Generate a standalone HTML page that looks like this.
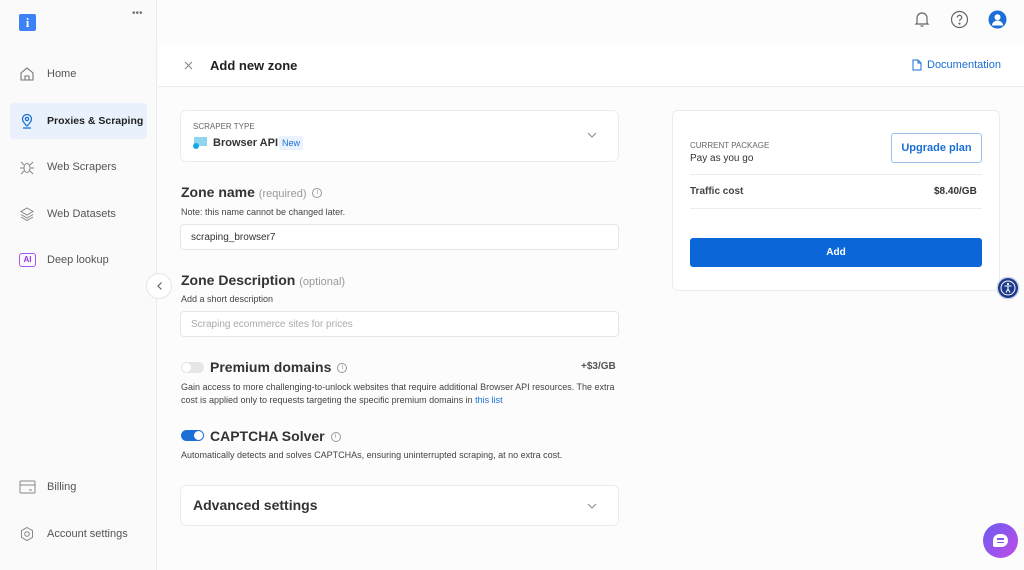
<!DOCTYPE html>
<html><head><meta charset="utf-8"><style>
*{box-sizing:border-box;margin:0;padding:0}
body{width:1024px;height:570px;overflow:hidden;font-family:"Liberation Sans",sans-serif;background:#fcfcfc;color:#222;position:relative;white-space:nowrap}
.abs{position:absolute}
.side{left:0;top:0;width:157px;height:570px;background:#fafafa;border-right:1px solid #ececec}
.nav{position:absolute;left:10px;width:137px;height:36px;display:flex;align-items:center;font-size:11px;color:#555}
.nav svg{position:absolute;left:9px}
.nav span{position:absolute;left:37px}
.card{background:#fff;border:1px solid #ececec;border-radius:6px}
.inp{left:180px;width:439px;height:26px;background:#fff;border:1px solid #e6e6e6;border-radius:4px;font-size:10px;padding:0 10px;display:flex;align-items:center}
h3{font-size:14px;font-weight:bold;color:#333}
.small{font-size:9px;color:#444}
.info{display:inline-block;width:10px;height:10px;border:1px solid #999;border-radius:50%;font-size:7px;color:#999;text-align:center;line-height:8px;vertical-align:middle;margin-left:6px;font-weight:normal}
</style></head><body>
<div class="abs side">
 <div class="abs" style="left:19px;top:14px;width:17px;height:17px;background:#3b82f6;border-radius:2px;color:#fff;font-weight:bold;font-size:13px;text-align:center;line-height:17px;font-family:'Liberation Serif',serif">i</div>
 <div class="abs" style="left:132px;top:8px;font-size:10px;color:#777">•••</div>
 <div class="nav" style="top:56px"><svg width="16" height="16" viewBox="0 0 16 16" fill="none" stroke="#777" stroke-width="1.1"><path d="M2 14V7l6-5 6 5v7zM6 14v-4h4v4"/></svg><span>Home</span></div>
 <div class="nav" style="top:103px;background:#e9f2fc;border-radius:3px;color:#222;font-weight:bold;font-size:10.5px"><svg width="16" height="16" viewBox="0 0 16 16" fill="none" stroke="#1b6fd6" stroke-width="1.3"><path d="M8 13s-4.5-4-4.5-7a4.5 4.5 0 019 0c0 3-4.5 7-4.5 7z"/><circle cx="8" cy="6" r="1.6"/><path d="M4 15h8"/></svg><span>Proxies &amp; Scraping</span></div>
 <div class="nav" style="top:149px"><svg width="16" height="16" viewBox="0 0 16 16" fill="none" stroke="#888" stroke-width="1"><ellipse cx="8" cy="9" rx="3" ry="4.5"/><path d="M5 6L2 3M11 6l3-3M5 9H1M11 9h4M5 12l-3 3M11 12l3 3"/></svg><span>Web Scrapers</span></div>
 <div class="nav" style="top:196px"><svg width="16" height="16" viewBox="0 0 16 16" fill="none" stroke="#888" stroke-width="1"><path d="M8 2l6 3.5-6 3.5-6-3.5zM2 8.5L8 12l6-3.5M2 11l6 3.5 6-3.5"/></svg><span>Web Datasets</span></div>
 <div class="nav" style="top:242px"><div class="abs" style="left:9px;width:17px;height:14px;border:1px solid #a855f7;border-radius:3px;color:#9333ea;font-size:8px;font-weight:bold;text-align:center;line-height:12px">AI</div><span>Deep lookup</span></div>
 <div class="nav" style="top:469px"><svg width="17" height="14" viewBox="0 0 17 14" fill="none" stroke="#888" stroke-width="1"><rect x="1" y="1" width="15" height="12" rx="1"/><path d="M1 5h15M10 10h3"/></svg><span>Billing</span></div>
 <div class="nav" style="top:516px"><svg width="16" height="16" viewBox="0 0 16 16" fill="none" stroke="#888" stroke-width="1"><path d="M8 1.5l5.5 3.2v6.6L8 14.5l-5.5-3.2V4.7z"/><circle cx="8" cy="8" r="2.3"/></svg><span>Account settings</span></div>
</div>
<div class="abs" style="left:146px;top:273px;width:26px;height:26px;border-radius:50%;background:#fff;border:1px solid #e5e5e5"><svg class="abs" style="left:8px;top:7px" width="10" height="10" viewBox="0 0 10 10" fill="none" stroke="#666" stroke-width="1.2"><path d="M6.5 1.5L3 5l3.5 3.5"/></svg></div>
<svg class="abs" style="left:913px;top:10px" width="18" height="18" viewBox="0 0 18 18" fill="none" stroke="#666" stroke-width="1.2"><path d="M4 13V8a5 5 0 0110 0v5l1 1H3zM7.5 16h3"/></svg>
<svg class="abs" style="left:950px;top:10px" width="19" height="19" viewBox="0 0 19 19" fill="none" stroke="#666" stroke-width="1.2"><circle cx="9.5" cy="9.5" r="8"/><path d="M7.3 7.5a2.2 2.2 0 114 1.2c-.8.6-1.8 1-1.8 2.3"/><circle cx="9.5" cy="13.6" r=".5" fill="#666"/></svg>
<svg class="abs" style="left:988px;top:10px" width="19" height="19" viewBox="0 0 19 19"><circle cx="9.5" cy="9.5" r="9" fill="#1b6fd6"/><circle cx="9.5" cy="7.3" r="3" fill="#fff"/><path d="M4 15.5a5.5 5 0 0111 0" fill="#fff"/></svg>
<div class="abs" style="left:158px;top:44px;width:866px;height:43px;background:#fff;border-bottom:1px solid #ececec"></div>
<svg class="abs" style="left:184px;top:61px" width="9" height="9" viewBox="0 0 9 9" stroke="#888" stroke-width="1.1"><path d="M1 1l7 7M8 1L1 8"/></svg>
<div class="abs" style="left:210px;top:58px;font-size:13px;font-weight:bold;color:#222">Add new zone</div>
<svg class="abs" style="left:912px;top:59px" width="10" height="12" viewBox="0 0 10 12" fill="none" stroke="#1b6fd6" stroke-width="1"><path d="M1 1h5l3 3v7H1zM6 1v3h3"/></svg>
<div class="abs" style="left:927px;top:59px;font-size:11px;color:#1b6fd6">Documentation</div>
<div class="abs card" style="left:180px;top:110px;width:439px;height:52px"></div>
<div class="abs" style="left:193px;top:122px;font-size:8px;color:#666">SCRAPER TYPE</div>
<div class="abs" style="left:194px;top:137px;width:13px;height:9px;background:#8fd6f0"></div>
<div class="abs" style="left:193px;top:143px;width:6px;height:6px;background:#1aa7e0;border-radius:50%"></div>
<div class="abs" style="left:213px;top:137px;font-size:11px;font-weight:bold;color:#333">Browser API</div>
<div class="abs" style="left:279px;top:136px;background:#eaf3fd;color:#1b6fd6;font-size:9px;padding:2px 3px;border-radius:2px">New</div>
<svg class="abs" style="left:587px;top:132px" width="10" height="6" viewBox="0 0 10 6" fill="none" stroke="#888" stroke-width="1"><path d="M1 1l4 4 4-4"/></svg>
<h3 class="abs" style="left:181px;top:184px">Zone name <span style="font-size:11px;font-weight:normal;color:#999">(required)</span><span class="info">i</span></h3>
<div class="abs small" style="left:181px;top:207px">Note: this name cannot be changed later.</div>
<div class="abs inp" style="top:224px;color:#333">scraping_browser7</div>
<h3 class="abs" style="left:181px;top:272px">Zone Description <span style="font-size:11px;font-weight:normal;color:#999">(optional)</span></h3>
<div class="abs small" style="left:181px;top:294px">Add a short description</div>
<div class="abs inp" style="top:311px;color:#aaa">Scraping ecommerce sites for prices</div>
<div class="abs" style="left:181px;top:362px;width:23px;height:11px;border-radius:6px;background:#e6e6e6"><div style="width:9px;height:9px;margin:1px;border-radius:50%;background:#fff"></div></div>
<h3 class="abs" style="left:210px;top:359px">Premium domains<span class="info">i</span></h3>
<div class="abs" style="left:581px;top:361px;font-size:10px;font-weight:bold;color:#555">+$3/GB</div>
<div class="abs small" style="left:181px;top:381px;line-height:13px;width:440px;white-space:normal">Gain access to more challenging-to-unlock websites that require additional Browser API resources. The extra cost is applied only to requests targeting the specific premium domains in <span style="color:#1b6fd6">this list</span></div>
<div class="abs" style="left:181px;top:430px;width:23px;height:11px;border-radius:6px;background:#1b6fd6"><div style="width:9px;height:9px;margin:1px 1px 1px 13px;border-radius:50%;background:#fff"></div></div>
<h3 class="abs" style="left:210px;top:428px">CAPTCHA Solver<span class="info">i</span></h3>
<div class="abs small" style="left:181px;top:450px">Automatically detects and solves CAPTCHAs, ensuring uninterrupted scraping, at no extra cost.</div>
<div class="abs card" style="left:180px;top:485px;width:439px;height:41px"></div>
<h3 class="abs" style="left:193px;top:497px">Advanced settings</h3>
<svg class="abs" style="left:587px;top:503px" width="10" height="6" viewBox="0 0 10 6" fill="none" stroke="#888" stroke-width="1"><path d="M1 1l4 4 4-4"/></svg>
<div class="abs card" style="left:672px;top:110px;width:328px;height:181px"></div>
<div class="abs" style="left:690px;top:141px;font-size:8px;color:#666">CURRENT PACKAGE</div>
<div class="abs" style="left:690px;top:153px;font-size:10px;color:#333">Pay as you go</div>
<div class="abs" style="left:891px;top:133px;width:91px;height:30px;border:1px solid #9cc2ec;border-radius:3px;color:#1b6fd6;font-size:11px;font-weight:bold;text-align:center;line-height:28px">Upgrade plan</div>
<div class="abs" style="left:690px;top:174px;width:292px;border-top:1px solid #ececec"></div>
<div class="abs" style="left:690px;top:186px;font-size:10px;font-weight:bold;color:#444">Traffic cost</div>
<div class="abs" style="left:934px;top:186px;font-size:10px;font-weight:bold;color:#333">$8.40/GB</div>
<div class="abs" style="left:690px;top:208px;width:292px;border-top:1px solid #ececec"></div>
<div class="abs" style="left:690px;top:238px;width:292px;height:29px;background:#0b67d8;border-radius:3px;color:#fff;font-size:10px;font-weight:bold;text-align:center;line-height:29px">Add</div>
<svg class="abs" style="left:996px;top:276px" width="24" height="24" viewBox="0 0 24 24"><circle cx="12" cy="12" r="11.5" fill="#cfd8ea"/><circle cx="12" cy="12" r="10" fill="#1e3a8a"/><circle cx="12" cy="12" r="7" fill="none" stroke="#fff" stroke-width="1"/><circle cx="12" cy="8" r="1.1" fill="#fff"/><path d="M8.5 10h7M12 10v3l-2 3.5M12 13l2 3.5" stroke="#fff" stroke-width="1.1" fill="none"/></svg>
<div class="abs" style="left:983px;top:523px;width:35px;height:35px;border-radius:50%;background:linear-gradient(135deg,#6b5cf0,#c04de8)"><div style="position:absolute;left:10px;top:11px;width:15px;height:13px;background:#fff;border-radius:7px 7px 7px 2px"></div><div style="position:absolute;left:14px;top:15px;width:7px;height:1.5px;background:#8b55ee"></div><div style="position:absolute;left:14px;top:18.5px;width:7px;height:1.5px;background:#8b55ee"></div></div>
</body></html>
